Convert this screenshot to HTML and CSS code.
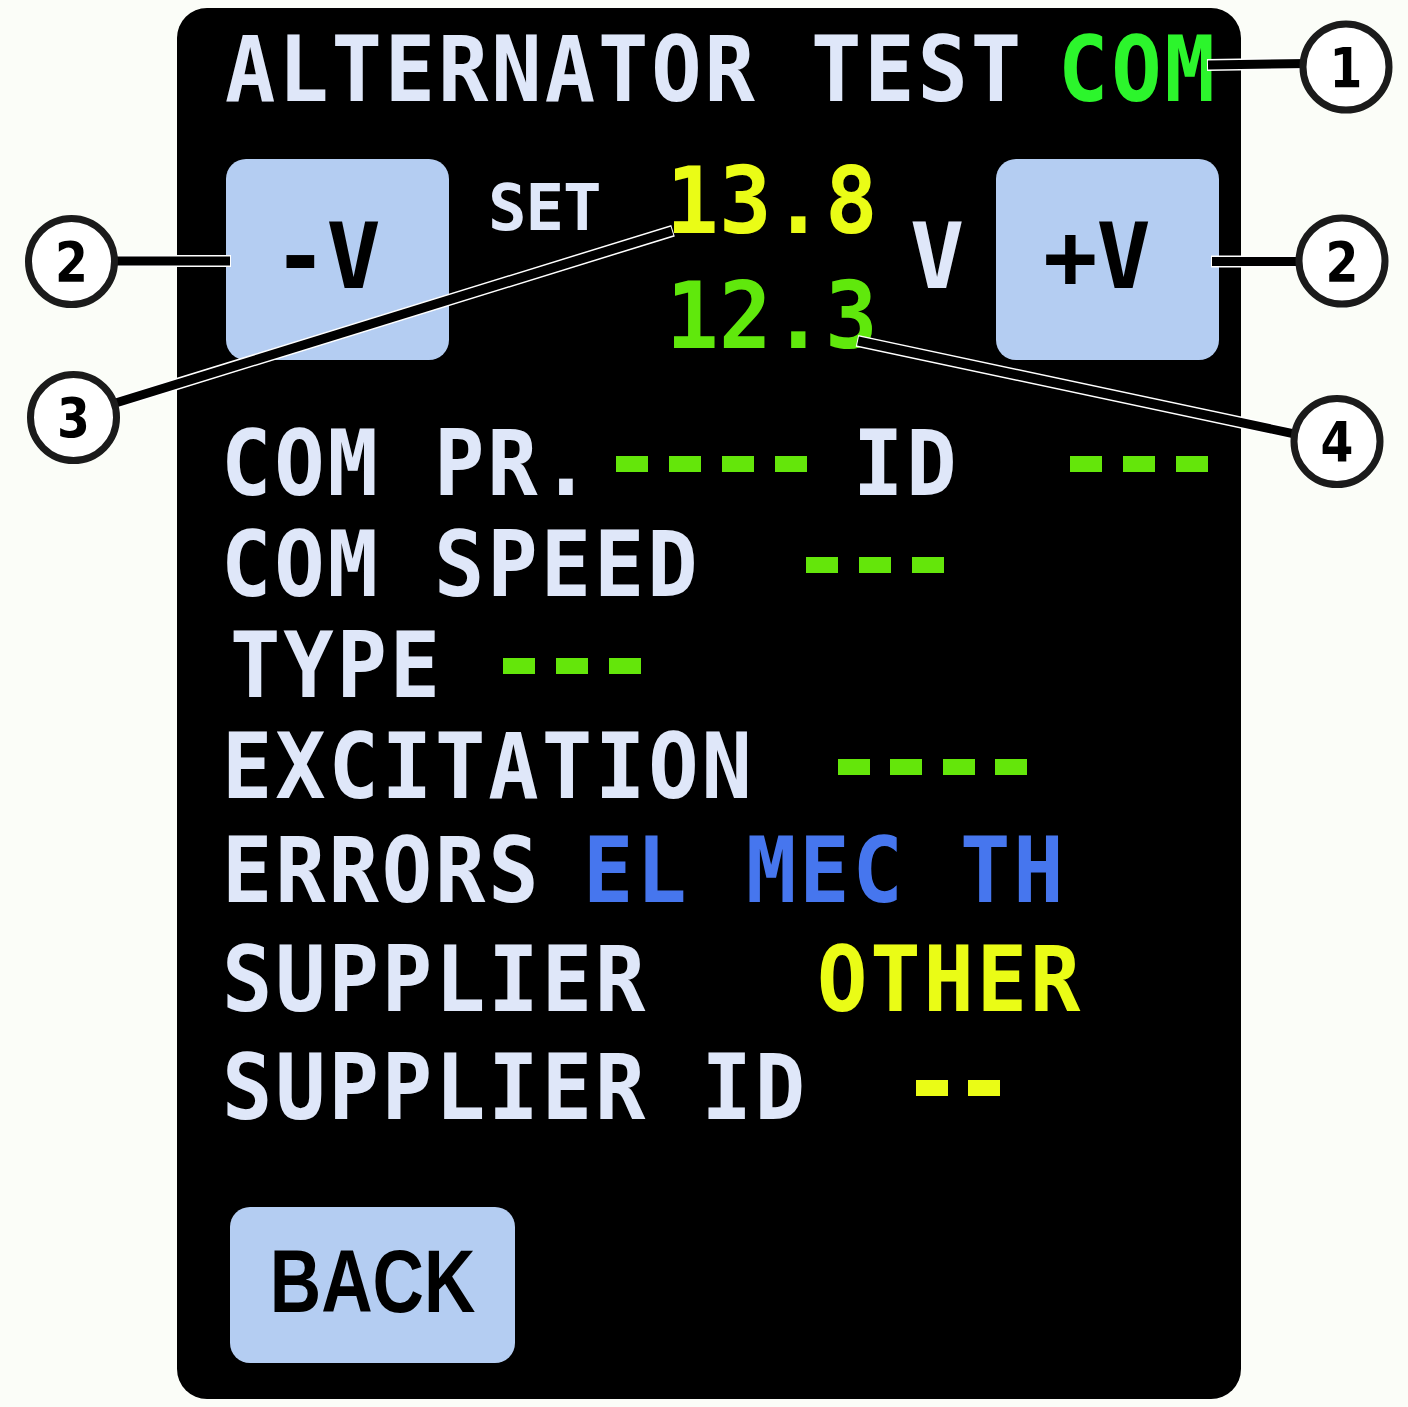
FILE: index.html
```html
<!DOCTYPE html>
<html>
<head>
<meta charset="utf-8">
<title>Alternator test COM</title>
<link rel="stylesheet" href="styles.css">
</head>
<body>
<div class="screen">
  <div class="title"><span class="t-main">ALTERNATOR TEST</span><span class="t-com">COM</span></div>
  <div class="ctrl">
    <div class="btn">-V</div>
    <div class="set-lbl">SET</div>
    <div class="vals">
      <div class="v-set">13.8</div>
      <div class="v-act">12.3</div>
    </div>
    <div class="unit">V</div>
    <div class="btn">+V</div>
  </div>
  <div class="row r1"><span class="w-compr">COM PR.</span><span class="dashes green w-d1"><i class="dash">-</i><i class="dash">-</i><i class="dash">-</i><i class="dash">-</i></span><span class="w-id">ID</span><span class="dashes green"><i class="dash">-</i><i class="dash">-</i><i class="dash">-</i></span></div>
  <div class="row r2"><span class="w-speed">COM SPEED</span><span class="dashes green"><i class="dash">-</i><i class="dash">-</i><i class="dash">-</i></span></div>
  <div class="row r3"><span class="w-type">TYPE</span><span class="dashes green"><i class="dash">-</i><i class="dash">-</i><i class="dash">-</i></span></div>
  <div class="row r4"><span class="w-exc">EXCITATION</span><span class="dashes green tight"><i class="dash">-</i><i class="dash">-</i><i class="dash">-</i><i class="dash">-</i></span></div>
  <div class="row r5"><span class="w-err">ERRORS</span><span class="blue w-el">EL</span><span class="blue w-mec">MEC</span><span class="blue">TH</span></div>
  <div class="row r6"><span class="w-sup">SUPPLIER</span><span class="yellow">OTHER</span></div>
  <div class="row r7"><span class="w-supid">SUPPLIER ID</span><span class="dashes yellow tight"><i class="dash">-</i><i class="dash">-</i></span></div>
  <div class="back"><span class="back-txt">BACK</span></div>
</div>
<svg class="callouts" width="1408" height="1407" viewBox="0 0 1408 1407">
  <g class="lead-w">
    <line x1="1207" y1="65" x2="1346" y2="63"/>
    <line x1="71" y1="261" x2="231" y2="261"/>
    <line x1="1211" y1="261.5" x2="1342" y2="261.5"/>
    <line x1="673" y1="230.7" x2="73.5" y2="416"/>
    <line x1="857" y1="340.8" x2="1337" y2="443"/>
  </g>
  <g class="lead-b">
    <line x1="1208" y1="65" x2="1346" y2="63"/>
    <line x1="71" y1="261" x2="230" y2="261"/>
    <line x1="1212" y1="261.5" x2="1342" y2="261.5"/>
    <line x1="672" y1="231" x2="73.5" y2="416"/>
    <line x1="858" y1="341" x2="1337" y2="443"/>
  </g>
  <g class="circ">
    <circle cx="1346" cy="67" r="43"/>
    <circle cx="71.5" cy="261.5" r="43"/>
    <circle cx="1342" cy="261" r="43"/>
    <circle cx="73.5" cy="417.5" r="43"/>
    <circle cx="1337" cy="441.5" r="43"/>
  </g>
  <g class="num">
    <text x="1346" y="87">1</text>
    <text x="71.5" y="281.5">2</text>
    <text x="1342" y="281">2</text>
    <text x="73.5" y="437.5">3</text>
    <text x="1337" y="461.5">4</text>
  </g>
</svg>
</body>
</html>
```

FILE: styles.css
```css
html, body {
  margin: 0;
  padding: 0;
}
body {
  background: #fbfdf8;
  width: 1408px;
  height: 1407px;
  overflow: hidden;
  font-family: "DejaVu Sans Mono", "Liberation Mono", monospace;
  font-weight: bold;
}
.screen {
  box-sizing: border-box;
  margin: 8px 0 0 177px;
  width: 1064px;
  height: 1391px;
  border-radius: 30px;
  background: #000;
  padding-top: 11.4px;
  color: #dfe7f9;
}
.title {
  display: flex;
  height: 101px;
  line-height: 101px;
  font-size: 90px;
  letter-spacing: 3.1px;
  margin-left: 48px;
  white-space: pre;
}
.title > span {
  flex: none;
  transform: scaleX(0.93);
  transform-origin: 0 50%;
}
.t-main {
  width: 833px;
}
.t-com {
  color: #2cf52c;
}
.ctrl {
  display: flex;
  align-items: flex-start;
  margin-top: 35.6px;
  height: 204px;
  margin-left: 49px;
}
.btn {
  box-sizing: border-box;
  flex: none;
  width: 223px;
  height: 201px;
  margin-top: 3px;
  border-radius: 20px;
  background: #b4cdf2;
  color: #000;
  display: flex;
  align-items: center;
  justify-content: center;
  padding: 0 22px 5px 0;
  font-size: 90px;
  line-height: 90px;
  letter-spacing: -0.9px;
}
.set-lbl {
  flex: none;
  margin-left: 39px;
  width: 178px;
  margin-top: 20px;
  font-size: 64px;
  line-height: 64px;
  letter-spacing: -1px;
}
.vals {
  flex: none;
  width: 244px;
  font-size: 93px;
  line-height: 90px;
  letter-spacing: 0.4px;
}
.v-set, .v-act {
  transform: scaleX(0.94);
  transform-origin: 0 50%;
}
.v-set {
  color: #eafc16;
}
.v-act {
  margin-top: 25px;
  color: #60e80c;
}
.unit {
  flex: none;
  width: 86px;
  margin-top: 56px;
  font-size: 90px;
  line-height: 90px;
}
.row {
  display: flex;
  height: 101px;
  line-height: 101px;
  font-size: 90px;
  letter-spacing: 3.1px;
  white-space: pre;
}
.row > span {
  flex: none;
  transform: scaleX(0.93);
  transform-origin: 0 50%;
}
.row > .dashes {
  transform: none;
}
.r1 { margin-top: 53.4px; margin-left: 44px; }
.r2 { margin-left: 44px; }
.r3 { margin-left: 53px; }
.r4 { margin-left: 45px; }
.r5 { margin-top: 3px; margin-left: 45px; }
.r6 { margin-top: 8px; margin-left: 45px; }
.r7 { margin-top: 7px; margin-left: 45px; }
.w-compr { width: 395px; }
.w-d1 { width: 237px; }
.w-id { width: 217px; }
.w-speed { width: 585px; }
.w-type { width: 273px; }
.w-exc { width: 616px; }
.w-err { width: 361px; }
.w-el { width: 162.5px; }
.w-mec { width: 214.5px; }
.w-sup { width: 595px; }
.w-supid { width: 694px; }
.green { color: #64e60a; }
.yellow { color: #eafc16; }
.blue { color: #4676ee; }
.dash {
  display: inline-block;
  width: 32px;
  height: 16px;
  margin: 0 21px 23px 0;
  vertical-align: baseline;
  overflow: hidden;
  background: currentColor;
  font-style: normal;
  font-size: 11px;
  line-height: 16px;
  letter-spacing: 0;
  text-align: center;
}
.tight .dash {
  margin-right: 20.3px;
}
.back {
  box-sizing: border-box;
  width: 285px;
  height: 156px;
  margin: 68.6px 0 0 53px;
  border-radius: 20px;
  background: #b4cdf2;
  color: #000;
  display: flex;
  align-items: center;
  justify-content: center;
  padding-bottom: 6px;
  font-family: "Liberation Sans", "Arial", sans-serif;
  font-size: 89px;
  line-height: 89px;
}
.back-txt {
  display: inline-block;
  transform: scaleX(0.8);
}
.callouts {
  position: absolute;
  left: 0;
  top: 0;
  pointer-events: none;
}
.lead-w line {
  stroke: #ffffff;
  stroke-width: 12;
  stroke-linecap: butt;
}
.lead-b line {
  stroke: #000000;
  stroke-width: 9;
  stroke-linecap: butt;
}
.circ circle {
  fill: #ffffff;
  stroke: #1b1b1b;
  stroke-width: 7;
}
.num text {
  font-family: "DejaVu Sans", sans-serif;
  font-weight: bold;
  font-size: 55px;
  text-anchor: middle;
  fill: #000;
  transform-box: fill-box;
  transform-origin: center;
  transform: scaleX(0.86);
}
```
